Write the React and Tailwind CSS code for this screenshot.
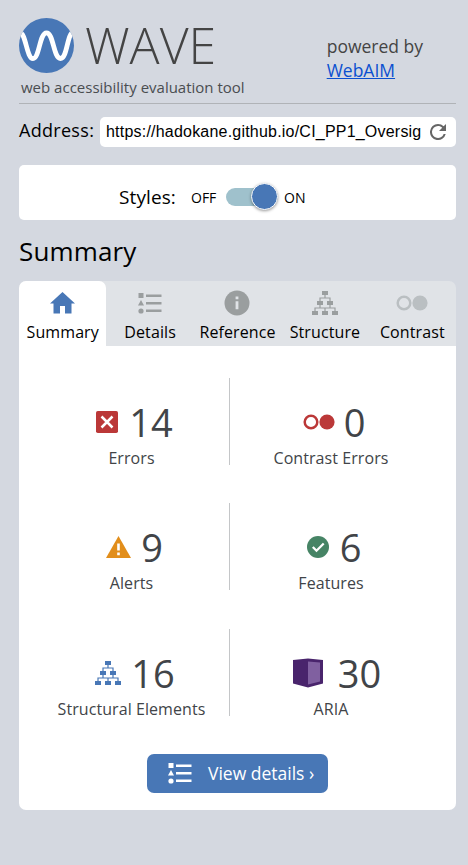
const HierarchyIcon = ({ className }) => (
  <svg className={className} width="26" height="24" viewBox="0 0 26 24" fill="currentColor">
    <rect x="10" y="0" width="6" height="4" />
    <rect x="5" y="10" width="6" height="4" />
    <rect x="15" y="10" width="6" height="4" />
    <rect x="0" y="20" width="6" height="4" />
    <rect x="10" y="20" width="6" height="4" />
    <rect x="20" y="20" width="6" height="4" />
    <path d="M13 4v3M8 10V7h10v3M8 14v3M18 14v3M3 20v-3h20v3M13 17v3" fill="none" stroke="currentColor" strokeWidth="1.2" />
  </svg>
);

const ListIcon = ({ className }) => (
  <svg className={className} width="24" height="21" viewBox="0 0 24 21" fill="currentColor">
    <rect x="0.5" y="0" width="5" height="5" />
    <path d="M3 7l3 5.500H0z" />
    <circle cx="3" cy="18" r="2.600" />
    <path d="M8 1.500h15.500v2.400H8zM8 9h15.500v2.400H8zM8 16.500h15.500v2.400H8z" />
  </svg>
);

const ContrastIcon = ({ className }) => (
  <svg className={className} width="32" height="16" viewBox="0 0 32 16">
    <circle cx="8" cy="8" r="6.300" fill="none" stroke="currentColor" strokeWidth="2.500" />
    <circle cx="24" cy="8" r="7.600" fill="currentColor" />
  </svg>
);

const HomeIcon = () => (
  <svg width="25" height="22" viewBox="0 0 25 22" fill="#4877b6">
    <path d="M12.500 0L25 11.500h-3.500V21.500h-6.500v-7.500h-5v7.500H3.500V11.500H0z" />
  </svg>
);

const InfoIcon = () => (
  <svg width="26" height="26" viewBox="0 0 26 26">
    <circle cx="13" cy="13" r="12.500" fill="#9a9e9f" />
    <path d="M11.600 6.500h2.800v2.700h-2.800zM11.600 11.200h2.800v8h-2.800z" fill="#e0e3e7" />
  </svg>
);

const ErrorIcon = () => (
  <svg width="22" height="22" viewBox="0 0 22 22">
    <rect width="22" height="22" rx="1.800" fill="#bb3838" />
    <path d="M5.500 5.500l11 11M16.500 5.500l-11 11" stroke="#fff" strokeWidth="2.500" />
  </svg>
);

const AlertIcon = () => (
  <svg width="25" height="22" viewBox="0 0 25 22">
    <path d="M12.500 0L25 22H0z" fill="#e28e1b" />
    <path d="M11.200 7.500h2.600v7h-2.600zM11.200 16.500h2.600v2.700h-2.600z" fill="#fff" />
  </svg>
);

const FeatureIcon = () => (
  <svg width="22" height="22" viewBox="0 0 22 22">
    <circle cx="11" cy="11" r="11" fill="#468465" />
    <path d="M5.800 11l3.700 3.700 7.200-7.200" fill="none" stroke="#fff" strokeWidth="2.300" />
  </svg>
);

const AriaIcon = () => (
  <svg width="30" height="30" viewBox="0 0 30 30">
    <path d="M0 2L15 0.500l15 1.500v23.500L15 29.500 0 25.500z" fill="#49246c" />
    <path d="M15 3.500l12 1v19L15 26.500z" fill="#8060a0" />
  </svg>
);

const WaveLogo = () => (
  <svg width="55" height="55" viewBox="0 0 55 55" className="shrink-0">
    <defs>
      <clipPath id="disc"><circle cx="27.500" cy="27.500" r="27.500" /></clipPath>
    </defs>
    <circle cx="27.500" cy="27.500" r="27.500" fill="#4877b6" />
    <path clipPath="url(#disc)" d="M0.500 14.500C7 14.500 7.500 40.500 14 40.500S20.500 14.800 27.500 14.800S34.500 40.500 41.500 40.500S48 14.500 54.500 14.500" fill="none" stroke="#fff" strokeWidth="4.800" />
  </svg>
);

const tabs = [
  { label: "Summary", icon: <HomeIcon />, active: true },
  { label: "Details", icon: <ListIcon className="text-[#9a9e9f]" /> },
  { label: "Reference", icon: <InfoIcon /> },
  { label: "Structure", icon: <HierarchyIcon className="text-[#9a9e9f]" /> },
  { label: "Contrast", icon: <ContrastIcon className="text-[#babfc2]" /> },
];

const stats = [
  [
    { n: "14", label: "Errors", icon: <ErrorIcon />, gap: "gap-[11px] pl-[6px]" },
    { n: "0", label: "Contrast Errors", icon: <ContrastIcon className="text-[#bb3838]" />, gap: "gap-[9px] pl-[6px]" },
  ],
  [
    { n: "9", label: "Alerts", icon: <AlertIcon />, gap: "gap-[10px] pl-[6px]" },
    { n: "6", label: "Features", icon: <FeatureIcon />, gap: "gap-[11px] pl-[6px]" },
  ],
  [
    { n: "16", label: "Structural Elements", icon: <HierarchyIcon className="text-[#4877b6]" />, gap: "gap-[10px] pl-[7px]" },
    { n: "30", label: "ARIA", icon: <AriaIcon />, gap: "gap-[15px] pl-[12px]" },
  ],
];

function Stat({ n, label, icon, gap }) {
  return (
    <div className="flex h-[87px] flex-col items-center whitespace-nowrap pt-[24px] text-[#414448]">
      <div className={"flex h-[40px] shrink-0 items-center " + gap}>
        {icon}
        <span className="text-[38px] leading-[40px]">{n}</span>
      </div>
      <div className="mt-[4px] text-[16px] leading-[24px] tracking-[0.07px]">{label}</div>
    </div>
  );
}

export default function App() {
  return (
    <div className="h-[865px] w-[468px] overflow-hidden bg-[#d4d8e0] pl-[19px] pr-[12px] font-['Open_Sans',sans-serif] text-black">
      <header className="flex h-[104px] justify-between border-b-[1px] border-[#b0b3b7] pt-[18px]">
        <div>
          <div className="flex h-[55px] items-center gap-[11px]">
            <WaveLogo />
            <span className="text-[50px] font-light leading-[55px] text-[#444]">WAVE</span>
          </div>
          <div className="ml-[2px] mt-[4px] whitespace-nowrap text-[15px] leading-[20px] text-[#4a4d50]">web accessibility evaluation tool</div>
        </div>
        <div className="mr-[33px] mt-[16px] whitespace-nowrap text-[17.5px] leading-[24px] text-[#444]">
          powered by
          <br />
          <a className="text-[#0b50d0] underline">WebAIM</a>
        </div>
      </header>

      <div className="mt-[13px] flex h-[30px]">
        <label className="w-[81px] whitespace-nowrap text-[18px] leading-[26px] tracking-[0.3px]">Address:</label>
        <div className="flex flex-1 items-center rounded-[5px] bg-white pl-[6px]">
          <div className="w-[315px] overflow-hidden whitespace-nowrap font-['Liberation_Sans',Arial,sans-serif] text-[16px] leading-[24px] tracking-[0.21px]">https://hadokane.github.io/CI_PP1_Oversig</div>
          <svg className="ml-[9px]" width="16" height="16" viewBox="4 4 16 16" fill="#666">
            <path d="M17.650 6.350A7.960 7.960 0 0 0 12 4a8 8 0 1 0 7.730 10h-2.080A6 6 0 1 1 12 6c1.660 0 3.140.69 4.220 1.780L13 11h7V4z" />
          </svg>
        </div>
      </div>

      <section className="mt-[18px] flex h-[55px] items-center rounded-[5px] bg-white pl-[100px] pt-[8px]">
        <span className="w-[72px] text-[19px] leading-[26px] tracking-[0.1px]">Styles:</span>
        <span className="w-[35px] pt-[2px] text-[14px]">OFF</span>
        <div className="flex h-[18px] w-[52px] items-center justify-end rounded-full bg-[#9fc1cc]">
          <span className="size-[27px] shrink-0 rounded-full border border-white bg-[#4877b6] shadow-[0_1px_3px_rgba(0,0,0,0.4)]" />
        </div>
        <span className="ml-[6px] pt-[2px] text-[14px]">ON</span>
      </section>

      <h1 className="mt-[13px] h-[48px] text-[26px] leading-[36px] tracking-[0.15px]">Summary</h1>

      <nav className="grid h-[65px] grid-cols-5 rounded-t-[7px] bg-[#e0e3e7]">
        {tabs.map((t) => (
          <div key={t.label} className={"flex flex-col items-center " + (t.active ? "rounded-t-[7px] bg-white" : "")}>
            <div className="mt-[9px] flex h-[26px] items-center">{t.icon}</div>
            <span className="mt-[4px] whitespace-nowrap text-[16px] leading-[24px] tracking-[0.1px]">{t.label}</span>
          </div>
        ))}
      </nav>

      <main className="flex h-[464px] flex-col items-center rounded-b-[7px] bg-white pt-[32px]">
        <div className="grid w-full grid-rows-[125px_126px_88px] pl-[15px] pr-[24px]">
          {stats.map(([a, b]) => (
            <div key={a.label} className="grid h-[87px] grid-cols-[196px_1fr]">
              <div className="border-r border-[#c4c6c8]"><Stat {...a} /></div>
              <Stat {...b} />
            </div>
          ))}
        </div>
        <button className="mt-[37px] flex h-[39px] w-[181px] items-center rounded-[7px] bg-[#4877b6] pl-[21px] text-white">
          <ListIcon />
          <span className="ml-[16px] whitespace-nowrap pb-[2px] text-[17.5px] leading-[26px]">View details ›</span>
        </button>
      </main>
    </div>
  );
}
